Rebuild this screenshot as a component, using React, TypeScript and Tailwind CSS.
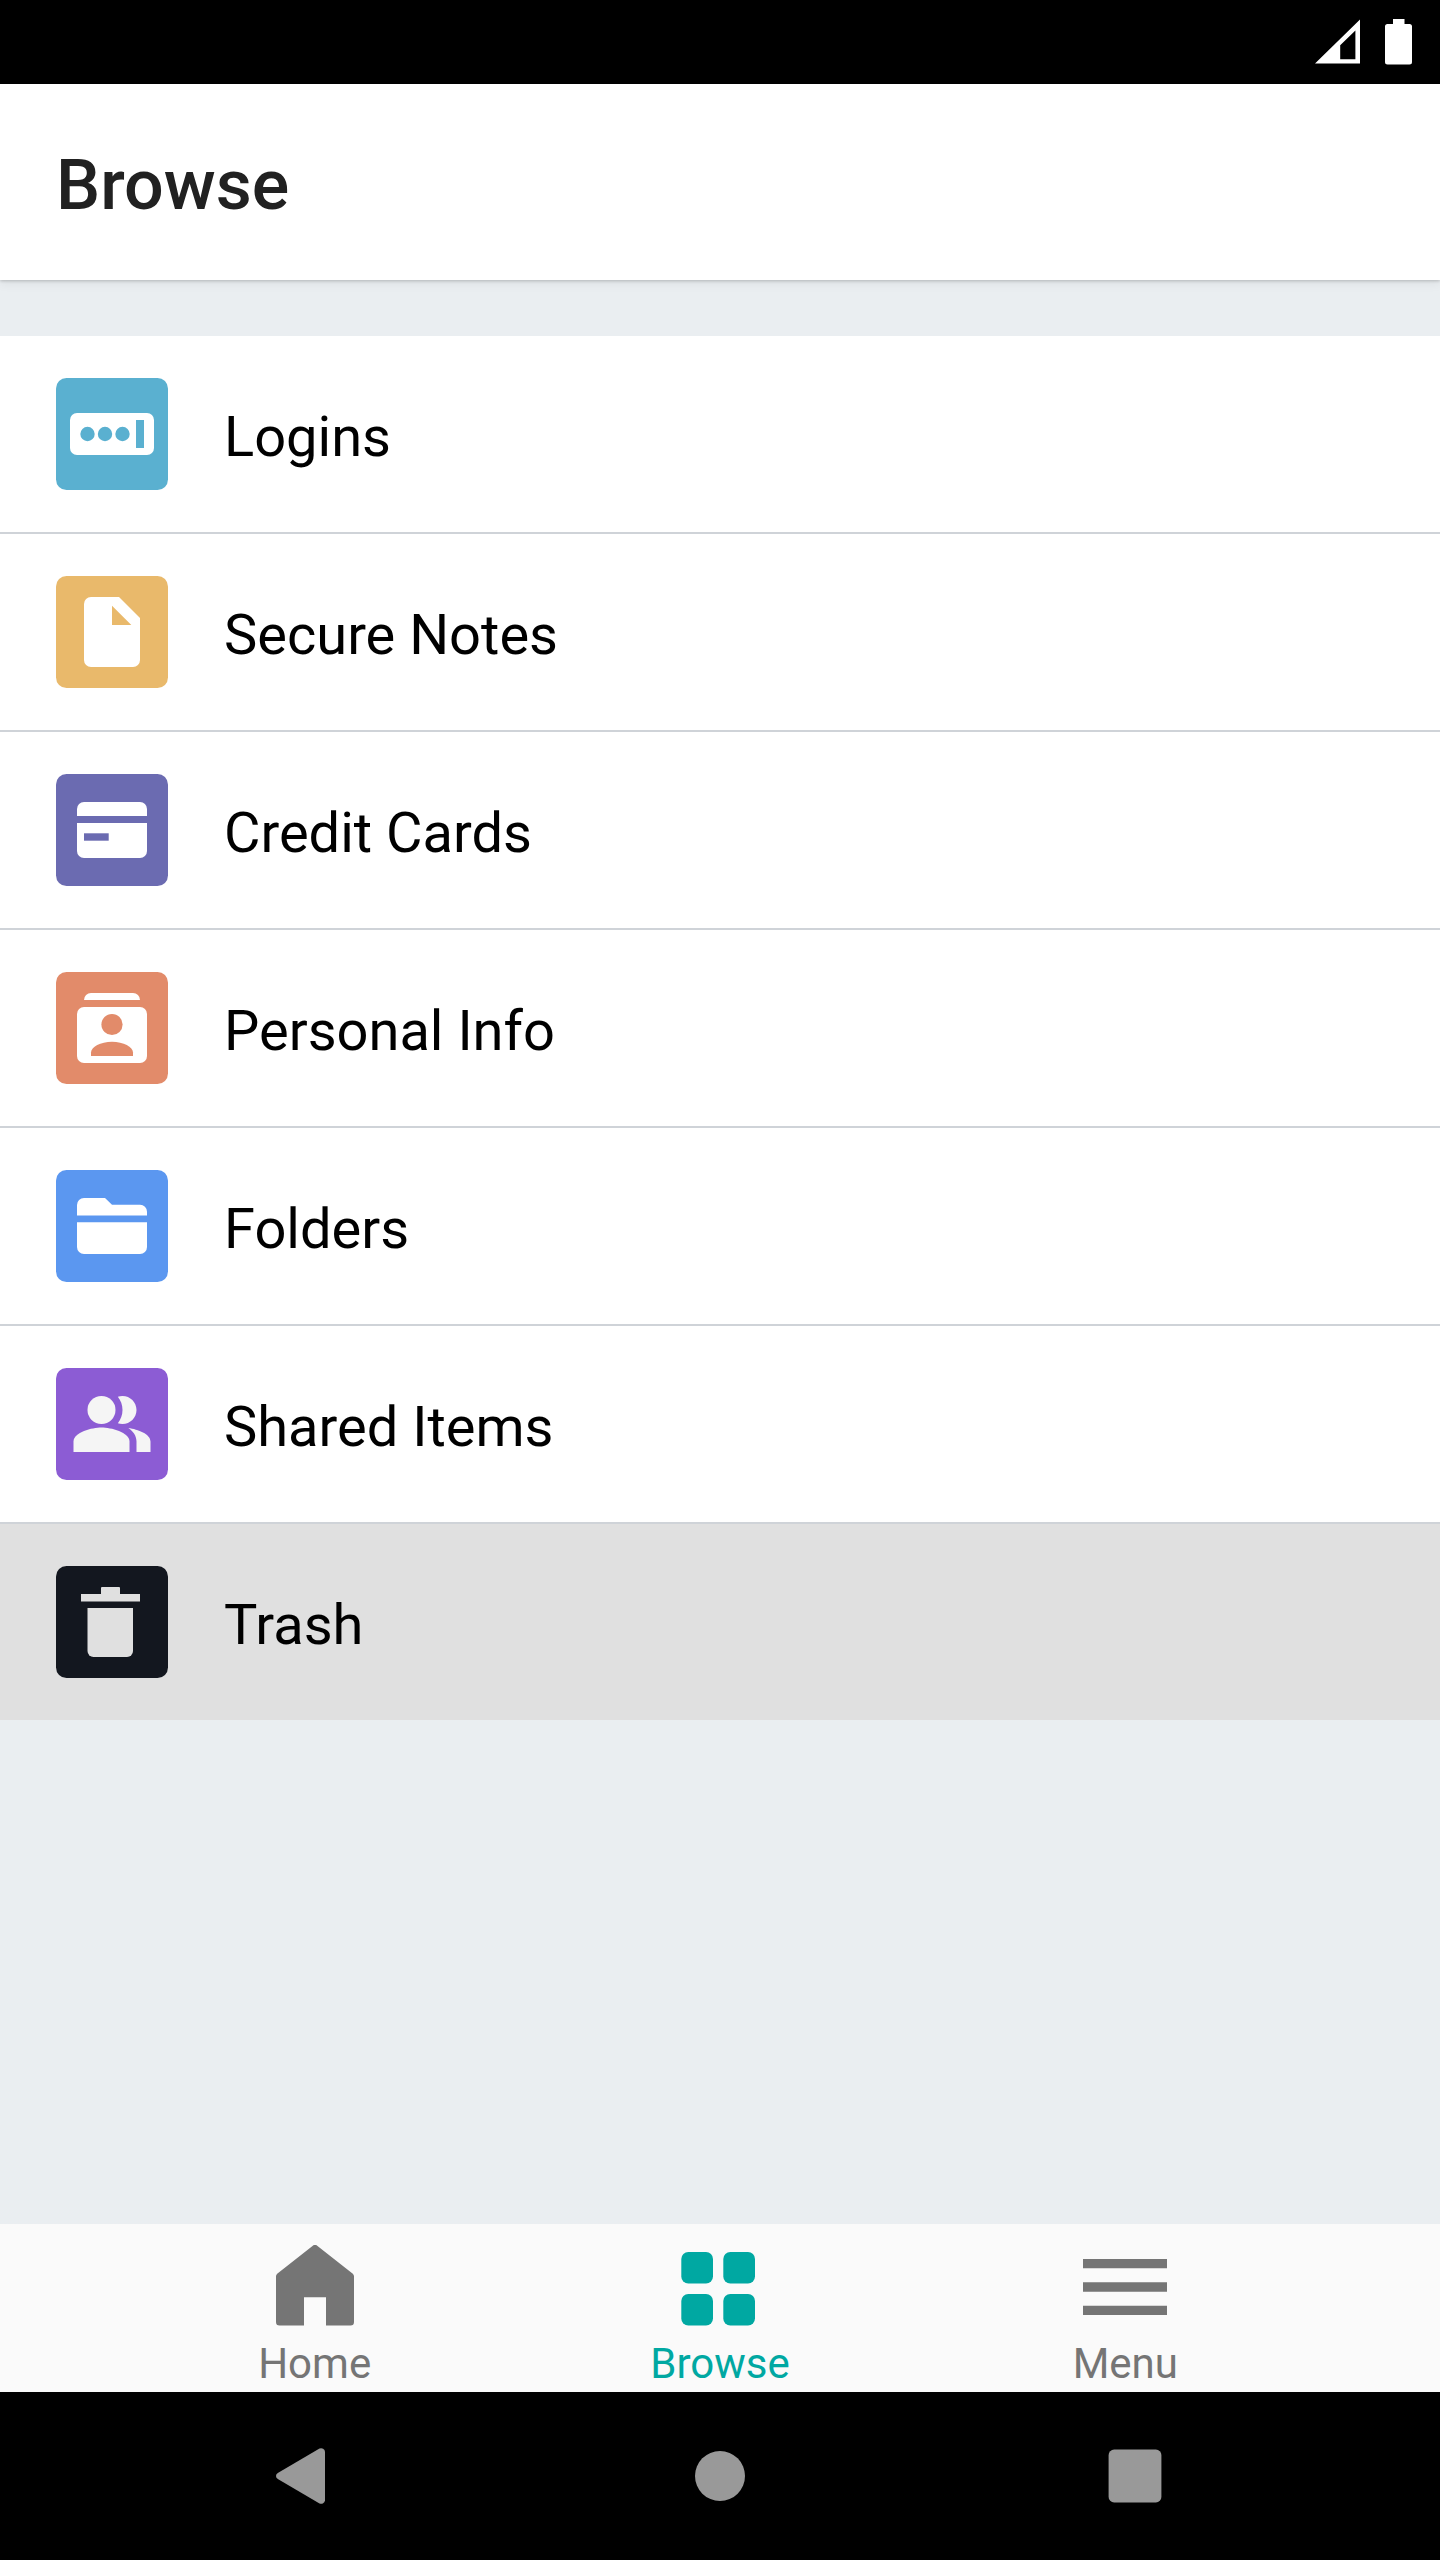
import type { ReactNode } from 'react';

type Category = { label: string; icon: ReactNode; selected?: boolean };

function Tile({ color, children }: { color: string; children: ReactNode }) {
  return (
    <svg className="size-28 shrink-0" viewBox="0 0 112 112" fill="#fff" aria-hidden="true">
      <rect width="112" height="112" rx="10.5" fill={color} />
      {children}
    </svg>
  );
}

const categories: Category[] = [
  {
    label: 'Logins',
    icon: (
      <Tile color="#5ab0d0">
        <rect x="14" y="35" width="84" height="42" rx="7" />
        <g fill="#5ab0d0">
          <circle cx="31.5" cy="56" r="7.2" />
          <circle cx="49" cy="56" r="7.2" />
          <circle cx="66.5" cy="56" r="7.2" />
          <rect x="80" y="42" width="8" height="28" />
        </g>
      </Tile>
    ),
  },
  {
    label: 'Secure Notes',
    icon: (
      <Tile color="#e9b96b">
        <path d="M35 21a7 7 0 0 0-7 7v56a7 7 0 0 0 7 7h42a7 7 0 0 0 7-7V42L63 21zM56 49V29.8L75.3 49z" />
      </Tile>
    ),
  },
  {
    label: 'Credit Cards',
    icon: (
      <Tile color="#6b6bb1">
        <path d="M21 42v-7a7 7 0 0 1 7-7h56a7 7 0 0 1 7 7v7z" />
        <path d="M21 49h70v28a7 7 0 0 1-7 7H28a7 7 0 0 1-7-7z" />
        <rect x="28" y="59.3" width="24.7" height="7.4" fill="#6b6bb1" />
      </Tile>
    ),
  },
  {
    label: 'Personal Info',
    icon: (
      <Tile color="#e28b6a">
        <path d="M28 28a7 7 0 0 1 7-7h42a7 7 0 0 1 7 7z" />
        <rect x="21" y="35" width="70" height="56" rx="7" />
        <g fill="#e28b6a">
          <circle cx="56" cy="52.5" r="10.6" />
          <path d="M35 84v-3.5c0-5.5 9.500-10.700 21-10.700s21 5.200 21 10.700V84z" />
        </g>
      </Tile>
    ),
  },
  {
    label: 'Folders',
    icon: (
      <Tile color="#5b97f0">
        <path d="M21 45.400V35a7 7 0 0 1 7-7h21l7 6.800h28a7 7 0 0 1 7 7v3.600z" />
        <path d="M21 52.300h70V77a7 7 0 0 1-7 7H28a7 7 0 0 1-7-7z" />
      </Tile>
    ),
  },
  {
    label: 'Shared Items',
    icon: (
      <Tile color="#8c5cd4">
        <g fill="#f5f5f5" transform="translate(14 14) scale(3.5)">
          <circle cx="9" cy="8" r="4" />
          <path d="M9 13c-2.670 0-8 1.340-8 4v3h16v-3c0-2.660-5.330-4-8-4z" />
          <path d="M16.670 13.130C18.040 14.060 19 15.320 19 17v3h4v-3c0-2.180-3.570-3.470-6.330-3.870z" />
          <path d="M15 12c2.210 0 4-1.790 4-4s-1.790-4-4-4c-.47 0-.91.1-1.330.24C14.500 5.270 15 6.580 15 8s-.5 2.730-1.330 3.760c.42.14.86.24 1.330.24z" />
        </g>
      </Tile>
    ),
  },
  {
    label: 'Trash',
    selected: true,
    icon: (
      <Tile color="#13171f">
        <g fill="#e0e0e0">
          <path d="M25 28h20v-6q0-1 1-1h17q1 0 1 1v6h20v7.500H25z" />
          <path d="M31.500 42H77v43a6 6 0 0 1-6 6H37.500a6 6 0 0 1-6-6z" />
        </g>
      </Tile>
    ),
  },
];

const tabs: { label: string; icon: ReactNode; active?: boolean }[] = [
  {
    label: 'Home',
    icon: (
      <path d="M39.500.900a4 4 0 0 1 5 0L79.800 28.700q1.200 1 1.200 2.500V77a3.500 3.500 0 0 1-3.500 3.500H53V52.200H31v28.300H6.500A3.500 3.500 0 0 1 3 77V31.200q0-1.500 1.200-2.500z" />
    ),
  },
  {
    label: 'Browse',
    active: true,
    icon: (
      <>
        <rect x="3.300" y="7" width="31.700" height="31.600" rx="7" />
        <rect x="45.300" y="7" width="31.700" height="31.600" rx="7" />
        <rect x="3.300" y="49" width="31.700" height="31.600" rx="7" />
        <rect x="45.300" y="49" width="31.700" height="31.600" rx="7" />
      </>
    ),
  },
  {
    label: 'Menu',
    icon: <path d="M0 14h84v9.300H0zM0 37.300h84v9.400H0zM0 60.700h84V70H0z" />,
  },
];

const systemButtons: { name: string; icon: ReactNode }[] = [
  {
    name: 'Back',
    icon: <path d="M63.500 21.600a3.800 3.800 0 0 1 5.500 3.200v48.400a3.800 3.800 0 0 1-5.500 3.200L21.800 52q-1.800-1.200-1.800-3t1.800-3z" />,
  },
  { name: 'Home screen', icon: <circle cx="49" cy="49" r="25" /> },
  { name: 'Recent apps', icon: <rect x="22.600" y="22.600" width="52.800" height="52.800" rx="5.500" /> },
];

export default function App() {
  return (
    <div className="flex min-h-screen flex-col bg-[#eaeef1] font-[Roboto,sans-serif]">
      <div className="flex h-[84px] items-start justify-end gap-6 bg-black pt-[19px] pr-7">
        <svg className="h-[46px] w-[46px]" viewBox="0 0 46 46" fill="#fff" role="img" aria-label="Signal">
          <path fillRule="evenodd" d="M0 44.500L45 .500v44zM25.200 40.200h15.200V11.500L25.200 26.300z" />
        </svg>
        <svg className="h-[46px] w-[27px]" viewBox="0 0 27 46" fill="#fff" role="img" aria-label="Battery">
          <path d="M8 5V0h11.500v5H24.500A2.500 2.500 0 0 1 27 7.500v35.500a2.500 2.500 0 0 1-2.500 2.500h-22A2.500 2.500 0 0 1 0 43V7.500A2.500 2.500 0 0 1 2.500 5z" />
        </svg>
      </div>

      <header className="flex h-[196px] items-center bg-white px-14 shadow-[0_1px_3px_rgba(0,0,0,0.2),0_4px_10px_rgba(0,0,0,0.06)]">
        <h1 className="pt-1.5 text-[70px] leading-[84px] font-medium text-[#212121]">Browse</h1>
      </header>

      <main className="flex-1 pt-14">
        <ul className="divide-y-2 divide-[#cfd3d8]">
          {categories.map(({ label, icon, selected }) => (
            <li key={label}>
              <button
                type="button"
                className={`flex w-full items-center gap-14 px-14 py-[42px] text-left ${selected ? 'bg-[#e0e0e0]' : 'bg-white'}`}
              >
                {icon}
                <span className="pt-1.5 text-[56px] leading-[66px] text-black">{label}</span>
              </button>
            </li>
          ))}
        </ul>
      </main>

      <nav className="grid grid-cols-3 bg-[#fafafa] px-28">
        {tabs.map(({ label, icon, active }) => (
          <button
            key={label}
            type="button"
            aria-current={active ? 'page' : undefined}
            className={`flex flex-col items-center pt-[21px] pb-1 ${active ? 'text-[#00a8a2]' : 'text-[#757575]'}`}
          >
            <svg className="size-[84px]" viewBox="0 0 84 84" fill="currentColor" aria-hidden="true">
              {icon}
            </svg>
            <span className="mt-[11px] text-[42px] leading-[48px]">{label}</span>
          </button>
        ))}
      </nav>

      <div className="grid h-[168px] grid-cols-3 bg-black px-[97px]">
        {systemButtons.map(({ name, icon }) => (
          <button key={name} type="button" aria-label={name} className="flex items-center justify-center">
            <svg className="size-[98px]" viewBox="0 0 98 98" fill="#999" aria-hidden="true">
              {icon}
            </svg>
          </button>
        ))}
      </div>
    </div>
  );
}
